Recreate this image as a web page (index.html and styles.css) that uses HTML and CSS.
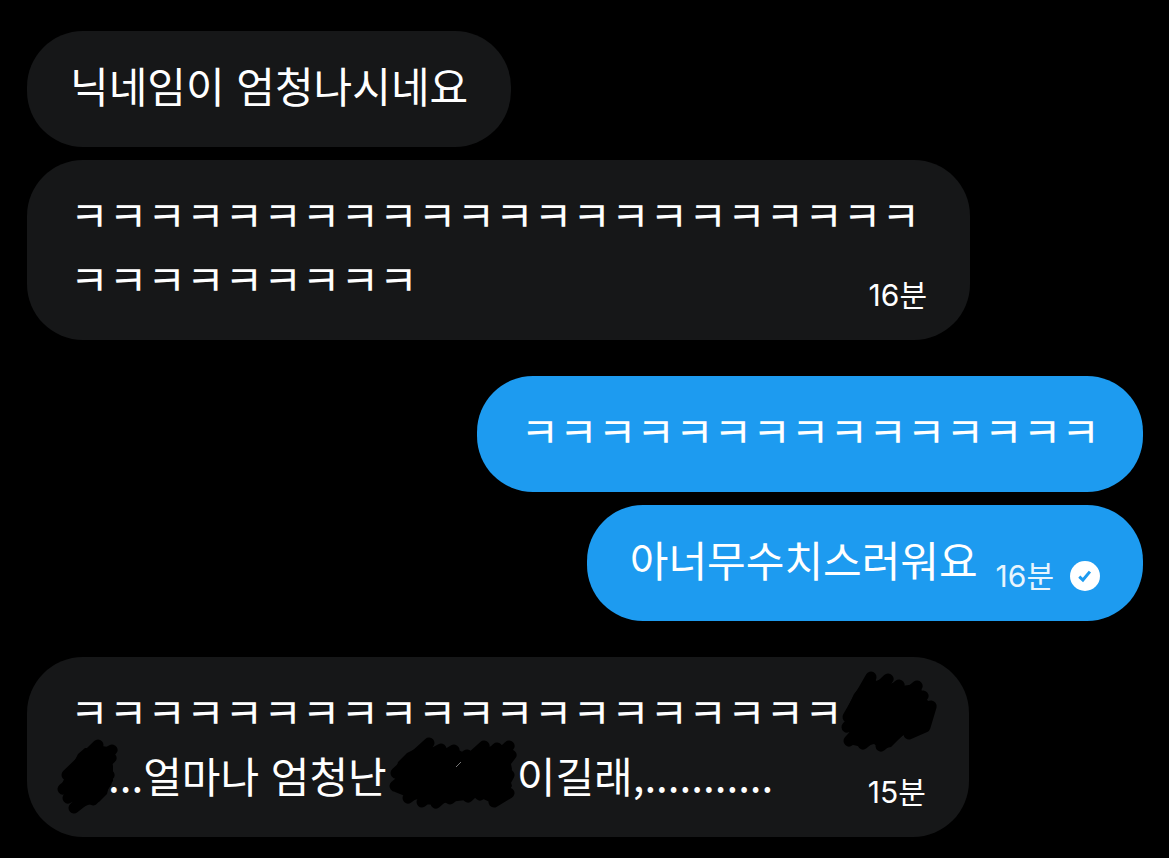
FILE: index.html
```html
<!DOCTYPE html>
<html lang="ko">
<head>
  <meta charset="UTF-8">
  <meta name="viewport" content="width=device-width, initial-scale=1.0">
  <title>쪽지</title>
  <link rel="stylesheet" href="styles.css">
</head>
<body>

  <main class="chat">
    <section class="group received">
      <p class="bubble">닉네임이 엄청나시네요</p>
      <p class="bubble">ㅋㅋㅋㅋㅋㅋㅋㅋㅋㅋㅋㅋㅋㅋㅋㅋㅋㅋㅋㅋㅋㅋ<wbr>ㅋㅋㅋㅋㅋㅋㅋㅋㅋ<span class="meta"><time>16분</time></span></p>
    </section>

    <section class="group sent">
      <p class="bubble">ㅋㅋㅋㅋㅋㅋㅋㅋㅋㅋㅋㅋㅋㅋㅋ</p>
      <p class="bubble">아너무수치스러워요<span class="meta"><time>16분</time><svg class="check" viewBox="0 0 30 30" aria-hidden="true"><circle cx="15" cy="15" r="15"/><path d="M9.3 15.6l3.6 3.4 7-8.4"/></svg></span></p>
    </section>

    <section class="group received">
      <!-- names are scribbled out by hand -->
      <p class="bubble">ㅋㅋㅋㅋㅋㅋㅋㅋㅋㅋㅋㅋㅋㅋㅋㅋㅋㅋㅋㅋ<svg class="scribble" width="83" height="64" viewBox="0 -4 83 64" aria-hidden="true"><path d="M27-8L32-6L33-2L44-6L45 1L56-1L58 3L74 1L78 4L79 9L84 12L84 17L90 21L91 25L87 36L82 42L82 48L68 54L60 52L48 64L38 66L31 61L19 64L6 61L3 56L7 50L1 43L6 30L5 24L11 11L20 0Z"/><path class="stroke" d="M28-6L5 34L45-4L4 44L56 2L6 58L74 3L20 61L80 13L38 63L88 23L66 51L82 44L88 24"/></svg><br><svg class="scribble" width="38" height="64" viewBox="-1 -4 38 64" aria-hidden="true"><path d="M27-3L31-1L43 1L43 5L40 10L42 19L42 34L38 39L36 47L28 55L17 58L3 63L2 60L5 54L-5 53L-3 48L-10 43L-10 39L-6 30L-6 25L2 17L7 7L14 1L22 1Z"/><path class="stroke" d="M27-2L-4 28L41 3L-8 42L40 11L-3 51L38 28L3 61L35 36L22 53"/></svg>...얼마나 엄청난<svg class="scribble" width="130" height="64" viewBox="-1 -4 130 64" aria-hidden="true"><path d="M41-5L42-2L41 1L53-1L58 2L66 1L79 7L94-3L99 0L109-1L121-3L122 1L125 6L122 12L124 22L122 32L124 39L121 44L122 49L116 52L106 57L91 50L78 53L61 55L48 58L34 57L31 52L19 54L17 49L7 45L6 40L10 34L6 30L10 15L19 6L29 1Z"/><path class="stroke" d="M41-4L8 26L53 2L7 39L66 3L20 51L79 8L34 55L96-1L48 56L109 1L62 52L121-1L80 50L123 8L92 48L121 28L106 55L121 46"/><path class="gap" d="M68 20l5-5"/></svg>이길래,...........<span class="meta"><time>15분</time></span></p>
    </section>
  </main>

</body>
</html>
```
FILE: styles.css
```css
* {
  box-sizing: border-box;
}

body {
  margin: 0;
  background-color: #000;
  color: #fff;
  font-family: "Noto Sans CJK KR", sans-serif;
}

.chat {
  display: flex;
  flex-direction: column;
  gap: 36px;
  padding: 31px 26px 20px 27px;
}

.group {
  display: flex;
  flex-direction: column;
  align-items: flex-start;
  gap: 13px;
}

.sent {
  align-items: flex-end;
}

.bubble {
  max-width: 84.5%;
  margin: 0;
  padding: 22px 43px 30px;
  border-radius: 56px;
  background-color: #161718;
  font-size: 42px;
  line-height: 64px;
  word-break: break-all;
}

.sent .bubble {
  background-color: #1d9bf0;
}

/* time sits at the right end of the last line */
.meta {
  float: right;
  display: flex;
  align-items: center;
  gap: 16px;
  margin: 34px 0 0 18px;
  font-family: Inter, "Noto Sans CJK KR", sans-serif;
  font-size: 30px;
  line-height: 30px;
}

.sent .meta {
  color: #e8f5fd;
}

.check {
  width: 30px;
  height: 30px;
  fill: #fff;
}

.check path {
  fill: none;
  stroke: #1d9bf0;
  stroke-width: 3;
}

.scribble {
  overflow: visible;
  vertical-align: top;
  fill: #000;
}

.scribble .stroke {
  fill: none;
  stroke: #000;
  stroke-width: 11;
  stroke-linecap: round;
  stroke-linejoin: round;
}

.scribble .gap {
  stroke: #777;
  stroke-width: 1;
}
```
